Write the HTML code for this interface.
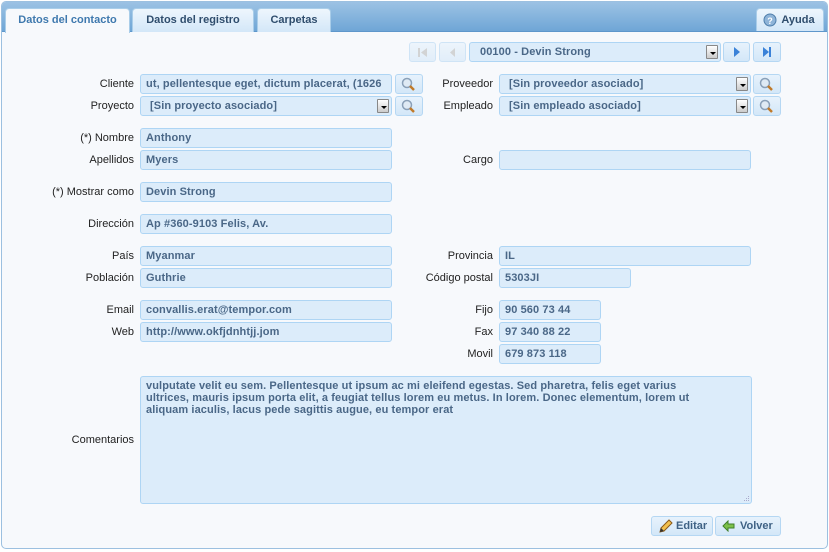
<!DOCTYPE html>
<html><head><meta charset="utf-8"><style>
*{box-sizing:border-box;margin:0;padding:0}
body{width:829px;height:552px;background:#fff;font-family:"Liberation Sans",sans-serif;font-size:11px;position:relative;overflow:hidden}
.frame{position:absolute;left:1px;top:1px;width:827px;height:548px;border:1px solid #9cc0e0;border-radius:5px;background:#f7f9fc;overflow:hidden}
.hdr{position:absolute;left:0;top:0;width:100%;height:30px;background:linear-gradient(#9cc2e4,#6fa6d6);border-bottom:1px solid #5f97cb}
.tab{position:absolute;top:6px;height:24px;border:1px solid #a9cde9;border-bottom:none;border-radius:4px 4px 0 0;background:linear-gradient(#eef6fd,#d3e7f8);color:#2f4d6d;font-weight:bold;font-size:11px;text-align:center;line-height:23px}
.tab.on{background:#f7f9fc;color:#3f79ae;height:25px}
.a{position:absolute}
.lbl{position:absolute;text-align:right;color:#222;font-size:11px;line-height:21px}
.in{position:absolute;height:20px;background:#dcecfa;border:1px solid #aed5f4;border-radius:3px;color:#4a6787;font-weight:bold;font-size:11px;line-height:19px;padding-left:5px;white-space:nowrap;overflow:hidden;letter-spacing:0.1px}
.dd{position:absolute;right:2px;top:2px;width:12px;height:14px;background:linear-gradient(#fff,#ccc);border:1px solid #888;border-radius:1px}
.dd:after{content:"";position:absolute;left:3px;top:6px;border:3px solid transparent;border-top:3px solid #000}
.btn{position:absolute;height:20px;background:linear-gradient(#e7f2fc,#d3e7f8);border:1px solid #b5d7f3;border-radius:3px}
</style></head><body>
<div class="frame">
<div class="hdr"></div>
<div class="tab on" style="left:3px;width:125px">Datos del contacto</div>
<div class="tab" style="left:130px;width:122px">Datos del registro</div>
<div class="tab" style="left:255px;width:74px">Carpetas</div>
<div class="tab" style="left:754px;width:68px;height:23px;line-height:22px;padding-left:16px">Ayuda
<svg class="a" style="left:6px;top:4px" width="14" height="14"><circle cx="7" cy="7" r="6" fill="#8fb4d8" stroke="#4f7eab"/><text x="7" y="11" font-size="9" font-weight="bold" fill="#fff" text-anchor="middle" font-family="Liberation Sans">?</text></svg></div>
</div>

<div class="btn" style="left:409px;top:42px;width:27px;opacity:.6"><svg width="25" height="18"><rect x="8" y="5" width="2" height="9" fill="#bbb"/><path d="M17 5v9l-6-4.5z" fill="#bbb"/></svg></div>
<div class="btn" style="left:439px;top:42px;width:27px;opacity:.6"><svg width="25" height="18"><path d="M15 5v9l-5-4.5z" fill="#bbb"/></svg></div>
<div class="in" style="left:469px;top:42px;width:252px;padding-left:10px">00100 - Devin Strong<div class="dd"></div></div>
<div class="btn" style="left:723px;top:42px;width:27px"><svg width="25" height="18"><path d="M10 4v10l6-5z" fill="#3b82d8"/></svg></div>
<div class="btn" style="left:753px;top:42px;width:28px"><svg width="26" height="18"><path d="M9 4v10l6-5z" fill="#3b82d8"/><rect x="15" y="4" width="2" height="10" fill="#3b82d8"/></svg></div>

<div class="lbl" style="left:40px;width:94px;top:74px">Cliente</div>
<div class="in" style="left:140px;top:74px;width:252px">ut, pellentesque eget, dictum placerat, (1626</div>
<div class="lbl" style="left:40px;width:94px;top:96px">Proyecto</div>
<div class="in" style="left:140px;top:96px;width:252px;padding-left:9px">[Sin proyecto asociado]<div class="dd"></div></div>
<div class="lbl" style="left:400px;width:93px;top:74px">Proveedor</div>
<div class="in" style="left:499px;top:74px;width:252px;padding-left:9px">[Sin proveedor asociado]<div class="dd"></div></div>
<div class="lbl" style="left:400px;width:93px;top:96px">Empleado</div>
<div class="in" style="left:499px;top:96px;width:252px;padding-left:9px">[Sin empleado asociado]<div class="dd"></div></div>
<div class="btn" style="left:395px;top:74px;width:28px"><svg width="26" height="18"><circle cx="11" cy="8" r="4.5" fill="#dfeaf4" stroke="#8aa0b8" stroke-width="1.5"/><path d="M14 11l4 4" stroke="#c07a2a" stroke-width="2.5"/></svg></div>
<div class="btn" style="left:395px;top:96px;width:28px"><svg width="26" height="18"><circle cx="11" cy="8" r="4.5" fill="#dfeaf4" stroke="#8aa0b8" stroke-width="1.5"/><path d="M14 11l4 4" stroke="#c07a2a" stroke-width="2.5"/></svg></div>
<div class="btn" style="left:753px;top:74px;width:28px"><svg width="26" height="18"><circle cx="11" cy="8" r="4.5" fill="#dfeaf4" stroke="#8aa0b8" stroke-width="1.5"/><path d="M14 11l4 4" stroke="#c07a2a" stroke-width="2.5"/></svg></div>
<div class="btn" style="left:753px;top:96px;width:28px"><svg width="26" height="18"><circle cx="11" cy="8" r="4.5" fill="#dfeaf4" stroke="#8aa0b8" stroke-width="1.5"/><path d="M14 11l4 4" stroke="#c07a2a" stroke-width="2.5"/></svg></div>

<div class="lbl" style="left:20px;width:114px;top:128px">(*) Nombre</div>
<div class="in" style="left:140px;top:128px;width:252px">Anthony</div>
<div class="lbl" style="left:20px;width:114px;top:150px">Apellidos</div>
<div class="in" style="left:140px;top:150px;width:252px">Myers</div>
<div class="lbl" style="left:400px;width:93px;top:150px">Cargo</div>
<div class="in" style="left:499px;top:150px;width:252px"></div>
<div class="lbl" style="left:20px;width:114px;top:182px">(*) Mostrar como</div>
<div class="in" style="left:140px;top:182px;width:252px">Devin Strong</div>
<div class="lbl" style="left:20px;width:114px;top:214px">Dirección</div>
<div class="in" style="left:140px;top:214px;width:252px">Ap #360-9103 Felis, Av.</div>
<div class="lbl" style="left:20px;width:114px;top:246px">País</div>
<div class="in" style="left:140px;top:246px;width:252px">Myanmar</div>
<div class="lbl" style="left:400px;width:93px;top:246px">Provincia</div>
<div class="in" style="left:499px;top:246px;width:252px">IL</div>
<div class="lbl" style="left:20px;width:114px;top:268px">Población</div>
<div class="in" style="left:140px;top:268px;width:252px">Guthrie</div>
<div class="lbl" style="left:400px;width:93px;top:268px">Código postal</div>
<div class="in" style="left:499px;top:268px;width:132px">5303JI</div>
<div class="lbl" style="left:20px;width:114px;top:300px">Email</div>
<div class="in" style="left:140px;top:300px;width:252px">convallis.erat@tempor.com</div>
<div class="lbl" style="left:400px;width:93px;top:300px">Fijo</div>
<div class="in" style="left:499px;top:300px;width:102px">90 560 73 44</div>
<div class="lbl" style="left:20px;width:114px;top:322px">Web</div>
<div class="in" style="left:140px;top:322px;width:252px">http://www.okfjdnhtjj.jom</div>
<div class="lbl" style="left:400px;width:93px;top:322px">Fax</div>
<div class="in" style="left:499px;top:322px;width:102px">97 340 88 22</div>
<div class="lbl" style="left:400px;width:93px;top:344px">Movil</div>
<div class="in" style="left:499px;top:344px;width:102px">679 873 118</div>

<div class="lbl" style="left:20px;width:114px;top:430px">Comentarios</div>
<div class="in" style="left:140px;top:376px;width:612px;height:128px;line-height:12px;padding:3px 5px;overflow:hidden">vulputate velit eu sem. Pellentesque ut ipsum ac mi eleifend egestas. Sed pharetra, felis eget varius<br>ultrices, mauris ipsum porta elit, a feugiat tellus lorem eu metus. In lorem. Donec elementum, lorem ut<br>aliquam iaculis, lacus pede sagittis augue, eu tempor erat
<svg class="a" style="right:1px;bottom:1px" width="8" height="8"><g fill="#aac"><rect x="6" y="2" width="1" height="1"/><rect x="4" y="4" width="1" height="1"/><rect x="6" y="4" width="1" height="1"/><rect x="2" y="6" width="1" height="1"/><rect x="4" y="6" width="1" height="1"/><rect x="6" y="6" width="1" height="1"/></g></svg></div>

<div class="btn" style="left:651px;top:516px;width:62px;color:#3f6285;font-weight:bold;line-height:19px;padding-left:24px">Editar
<svg class="a" style="left:5px;top:2px" width="16" height="16"><path d="M3 13l1-4 8-8 3 3-8 8z" fill="#f2c14e" stroke="#8a5a1a"/><path d="M3 13l1-4 3 3z" fill="#333"/></svg></div>
<div class="btn" style="left:715px;top:516px;width:66px;color:#3f6285;font-weight:bold;line-height:19px;padding-left:24px">Volver
<svg class="a" style="left:6px;top:3px" width="14" height="12"><path d="M1 6l5-5v3h6v4H6v3z" fill="#7cc14a" stroke="#3f7f2a"/></svg></div>
</body></html>
